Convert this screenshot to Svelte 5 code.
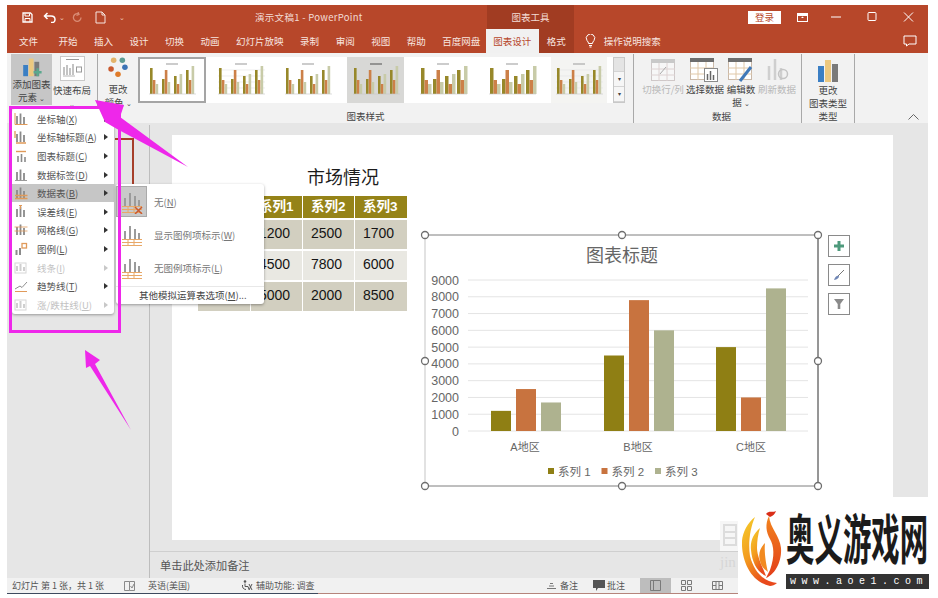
<script lang="ts">
    const tabs = ["开始", "插入", "设计", "切换", "动画", "幻灯片放映", "录制", "审阅", "视图", "帮助", "百度网盘"];

    const thumbs = [
        { w: 68, gap: 0, bg: "#fff", selected: true },
        { w: 58, gap: 6, bg: "#fff", grid: true },
        { w: 56, gap: 10, bg: "#fff" },
        { w: 57, gap: 11, bg: "#d8d8d6", dark: true },
        { w: 56, gap: 11, bg: "#fff", wide: true },
        { w: 57, gap: 12, bg: "#fff", wide: true },
        { w: 56, gap: 11, bg: "#f4f4f2", grid: true },
    ];
    const thumbBars = [
        [26, 14, 10],
        [15, 24, 12],
        [18, 10, 20],
        [24, 14, 28],
    ];

    const menuItems = [
        { label: "坐标轴", key: "X", icon: "axis" },
        { label: "坐标轴标题", key: "A", icon: "title" },
        { label: "图表标题", key: "C", icon: "top" },
        { label: "数据标签", key: "D", icon: "label" },
        { label: "数据表", key: "B", icon: "table", active: true },
        { label: "误差线", key: "E", icon: "error" },
        { label: "网格线", key: "G", icon: "grid" },
        { label: "图例", key: "L", icon: "legend" },
        { label: "线条", key: "I", icon: "off", disabled: true },
        { label: "趋势线", key: "T", icon: "trend" },
        { label: "涨/跌柱线", key: "U", icon: "off", disabled: true },
    ];

    const subItems = [
        { label: "无", key: "N", kind: "none", selected: true },
        { label: "显示图例项标示", key: "W", kind: "keys" },
        { label: "无图例项标示", key: "L", kind: "plain" },
    ];

    const table = [
        ["", "系列1", "系列2", "系列3"],
        ["", "1200", "2500", "1700"],
        ["", "4500", "7800", "6000"],
        ["", "5000", "2000", "8500"],
    ];

    // chart geometry in page pixels, relative to the chart svg
    const chartTop = 280 - 225;
    const chartZero = 431 - 225;
    const ticks = [0, 1000, 2000, 3000, 4000, 5000, 6000, 7000, 8000, 9000];
    const colors = ["#8f7f14", "#c8733f", "#aeb28f"];
    const groups = [
        { name: "A地区", cx: 106, x: [72, 97, 122], v: [1200, 2500, 1700] },
        { name: "B地区", cx: 219, x: [185, 210, 235], v: [4500, 7800, 6000] },
        { name: "C地区", cx: 332, x: [297, 322, 347], v: [5000, 2000, 8500] },
    ];
    const y = (v: number) => chartZero - (v / 9000) * (chartZero - chartTop);
    const handles = [
        [6, 10], [203, 10], [399, 10],
        [6, 136], [399, 136],
        [6, 261], [203, 261], [399, 261],
    ];
</script>

{#snippet bars(accent: string, kind: string)}
    <svg class="micon" viewBox="0 0 14 14" width="14" height="14">
        {#if kind === "off"}
            <rect x="1" y="2" width="11" height="10" fill="none" stroke="#d6d6d6" />
            <path d="M3 10V5M6.500 10V3M10 10V6" stroke="#cfcfcf" stroke-width="2" />
        {:else if kind === "trend"}
            <path d="M1 12.500H13" stroke={accent} />
            <path d="M1 10L6 7L8 8.500L13 3" stroke="#8f8f8f" fill="none" />
        {:else if kind === "legend"}
            <path d="M2.500 13V8M6 13V6" stroke="#8a8a8a" stroke-width="2" />
            <rect x="8" y="1.500" width="4.500" height="4.500" fill="none" stroke={accent} stroke-width="1.300" />
        {:else if kind === "top"}
            <path d="M2 2.500H12" stroke={accent} stroke-width="1.400" />
            <path d="M4 13V7M7.500 13V5M11 13V8" stroke="#8a8a8a" stroke-width="1.600" />
        {:else}
            <path d="M3 12V4M6.500 12V1.500M10 12V5" stroke="#8a8a8a" stroke-width="1.800" />
            {#if kind === "axis"}
                <path d="M1 1V12.500H13.500" stroke={accent} fill="none" />
            {:else if kind === "title"}
                <path d="M1 1V8M2 13H12" stroke={accent} stroke-width="1.300" fill="none" />
            {:else if kind === "table"}
                <path d="M1 9.500H13.500M1 12.500H13.500" stroke={accent} stroke-width="1.300" />
            {:else if kind === "grid"}
                <path d="M0.500 4H13.500M0.500 8H13.500" stroke={accent} stroke-width="0.800" />
            {:else if kind === "error"}
                <path d="M6.500 0.500V4M5 0.500H8" stroke={accent} />
            {:else}
                <path d="M1 12.500H13" stroke="#9a9a9a" />
            {/if}
        {/if}
    </svg>
{/snippet}

<div class="window">
    <header class="titlebar">
        <div class="qat">
            <svg class="save" width="11" height="11" viewBox="0 0 11 11">
                <path d="M1 1H8.500L10 2.500V10H1Z" fill="none" stroke="#fff" stroke-width="1.300" />
                <path d="M3 1.500V4H7.500V1.500M3 10V6.500H8V10" fill="none" stroke="#fff" />
            </svg>
            <svg width="13" height="11" viewBox="0 0 13 11">
                <path d="M2 4H8Q12 4 12 7.500T8 10.500M4.500 1L1.500 4L4.500 7" fill="none" stroke="#fff" stroke-width="1.500" />
            </svg>
            <span class="caret">⌄</span>
            <svg class="redo" width="11" height="11" viewBox="0 0 11 11">
                <path d="M9 5.500A3.800 3.800 0 1 1 6 1.800M6 0L7 2.500L4.500 3.500" fill="none" stroke="#d98c75" stroke-width="1.300" />
            </svg>
            <svg class="newdoc" width="11" height="13" viewBox="0 0 11 13">
                <path d="M1 1H7L10 4V12H1ZM7 1V4H10" fill="none" stroke="#f6e6e0" />
            </svg>
            <span class="caret more">⌄</span>
        </div>
        <div class="doc-title">演示文稿1 - PowerPoint</div>
        <div class="tools-label">图表工具</div>
        <button class="login">登录</button>
        <svg class="winicon display" width="11" height="9" viewBox="0 0 11 9">
            <rect x="0.500" y="0.500" width="10" height="8" fill="none" stroke="#fff" />
            <path d="M1 1H10V3H1ZM4 5L5.500 3.500L7 5Z" fill="#fff" />
        </svg>
        <svg class="winicon" width="36" height="10" viewBox="0 0 36 10"><path d="M13 5H23" stroke="#fff" /></svg>
        <svg class="winicon" width="36" height="10" viewBox="0 0 36 10"><rect x="14" y="0.500" width="8" height="8" rx="1" fill="none" stroke="#fff" /></svg>
        <svg class="winicon" width="36" height="10" viewBox="0 0 36 10"><path d="M14 0.500L23 9.500M23 0.500L14 9.500" stroke="#fff" /></svg>
    </header>

    <nav class="tabs">
        <span class="tab first">文件</span>
        {#each tabs as tab}
            <span class="tab">{tab}</span>
        {/each}
        <span class="tab-active">图表设计</span>
        <span class="tab-context">格式</span>
        <svg class="bulb" width="11" height="14" viewBox="0 0 11 14">
            <path d="M3.500 9.500Q3.500 8 2 6.500A4.200 4.200 0 1 1 9 6.500Q7.500 8 7.500 9.500ZM4 11.500H7M4.500 13H6.500" fill="none" stroke="#fff" />
        </svg>
        <span class="search">操作说明搜索</span>
        <svg class="comment" width="14" height="12" viewBox="0 0 14 12">
            <path d="M1 1H13V9H6L3.500 11V9H1Z" fill="none" stroke="#fff" />
        </svg>
    </nav>

    <section class="ribbon">
        <div class="group g-add">
            <div class="group-body">
                <div class="rbtn add-btn">
                    <svg width="24" height="25" viewBox="0 0 24 25">
                        <rect x="1" y="10" width="6" height="14" fill="#3b7fc4" />
                        <rect x="8" y="2" width="6" height="22" fill="#ecc87f" />
                        <rect x="15" y="6" width="6" height="18" fill="#7a7a7a" />
                        <path d="M14 19H24M19 14V24" stroke="#5ba88e" stroke-width="3" />
                    </svg>
                    <span>添加图表<br />元素 <i>⌄</i></span>
                </div>
                <div class="rbtn layout-btn">
                    <svg width="25" height="25" viewBox="0 0 25 25">
                        <rect x="0.500" y="0.500" width="24" height="24" fill="#fff" stroke="#c9c9c9" />
                        <path d="M6 3.500H19" stroke="#9a9a9a" />
                        <path d="M4 19V11M7 19V9M10 19V12M13 19V8" stroke="#9c9c9c" stroke-width="1.200" />
                        <rect x="16.500" y="11" width="5" height="5" fill="none" stroke="#9a9a9a" />
                        <path d="M3 20H15" stroke="#b5b5b5" />
                    </svg>
                    <span>快速布局<br /><i>⌄</i></span>
                </div>
            </div>
        </div>

        <div class="group g-styles">
            <div class="group-body">
                <div class="rbtn color-btn">
                    <svg width="24" height="30" viewBox="0 0 24 30">
                        <circle cx="7" cy="5" r="3.200" fill="#e3b36a" />
                        <circle cx="17" cy="5" r="3.200" fill="#5d9b93" />
                        <circle cx="4" cy="15" r="3.200" fill="#c9592e" />
                        <circle cx="20" cy="13" r="3.200" fill="#3b73b5" />
                        <circle cx="12" cy="21" r="3.200" fill="#e07b2a" />
                    </svg>
                    <span>更改<br />颜色 <i>⌄</i></span>
                </div>
                <div class="gallery">
                    {#each thumbs as t}
                        <div class="thumb" class:selected={t.selected} style="width:{t.w}px;margin-left:{t.gap}px;background:{t.bg}">
                            <svg width="52" height="38" viewBox="0 0 52 38">
                                <path d="M20 3H32" stroke={t.dark ? "#666" : "#aaa"} stroke-width="1.200" />
                                {#if t.grid}
                                    <path d="M3 9H50M3 15H50M3 21H50M3 27H50" stroke="#e2e2e2" stroke-width="0.600" />
                                {/if}
                                {#each thumbBars as set, i}
                                    {#each set as h, j}
                                        <rect
                                            x={4 + i * 12 + j * (t.wide ? 3.500 : 2.800)}
                                            y={33 - h}
                                            width={t.wide ? 3.500 : 2.600}
                                            height={h}
                                            fill={["#97882a", "#cc8048", "#c8cba8"][j]}
                                        />
                                    {/each}
                                {/each}
                                <path d="M3 33H50" stroke="#c8c8c8" stroke-width="0.600" />
                            </svg>
                        </div>
                    {/each}
                </div>
                <div class="scroller">
                    <span class="up"></span>
                    <span class="down">▾</span>
                    <span class="down">▾</span>
                </div>
            </div>
            <div class="group-label">图表样式</div>
        </div>

        <div class="group g-data">
            <div class="group-body">
                <div class="dbtn disabled">
                    <svg width="24" height="22" viewBox="0 0 24 22">
                        <rect x="0.500" y="0.500" width="23" height="21" fill="#f7f7f7" stroke="#cfc8c8" />
                        <rect x="0" y="0" width="24" height="4" fill="#c9c9c9" />
                        <path d="M0 10H24M0 16H24M8 4V22M16 4V22" stroke="#ddd2d2" />
                        <path d="M9 15L15 8" stroke="#aaa" />
                    </svg>
                    <span>切换行/列</span>
                </div>
                <div class="dbtn">
                    <svg width="30" height="24" viewBox="0 0 30 24">
                        <rect x="0.500" y="0.500" width="23" height="21" fill="#fff" stroke="#c9b8a8" />
                        <rect x="0" y="0" width="24" height="4" fill="#6d6d6d" />
                        <path d="M0 10H24M0 16H24M8 4V22M16 4V22" stroke="#e0c8a8" />
                        <rect x="14.500" y="10.500" width="13" height="13" fill="#fff" stroke="#8a8a8a" />
                        <path d="M17.500 22V16M20.500 22V13M23.500 22V17" stroke="#666" stroke-width="1.500" />
                    </svg>
                    <span>选择数据</span>
                </div>
                <div class="dbtn narrow">
                    <svg width="26" height="24" viewBox="0 0 26 24">
                        <rect x="0.500" y="0.500" width="23" height="21" fill="#fff" stroke="#c9b8a8" />
                        <rect x="0" y="0" width="24" height="4" fill="#6d6d6d" />
                        <path d="M0 10H24M0 16H24M8 4V22M16 4V22" stroke="#e0c8a8" />
                        <path d="M12 23L23 9" stroke="#3f78b8" stroke-width="3" />
                    </svg>
                    <span>编辑数<br />据 <i>⌄</i></span>
                </div>
                <div class="dbtn disabled">
                    <svg width="24" height="24" viewBox="0 0 24 24">
                        <path d="M4 22V8M10 22V1M16 22V10" stroke="#cfcfcf" stroke-width="2.500" />
                        <circle cx="18" cy="16" r="4.500" fill="none" stroke="#c4c4c4" stroke-width="1.500" />
                    </svg>
                    <span>刷新数据</span>
                </div>
            </div>
            <div class="group-label">数据</div>
        </div>

        <div class="group g-type">
            <div class="group-body">
                <div class="rbtn type-btn">
                    <svg width="22" height="22" viewBox="0 0 22 22">
                        <rect x="1" y="6" width="6" height="16" fill="#3b7fc4" />
                        <rect x="8" y="0" width="6" height="22" fill="#ecc87f" />
                        <rect x="15" y="4" width="6" height="18" fill="#7a7a7a" />
                    </svg>
                    <span>更改<br />图表类型</span>
                </div>
            </div>
            <div class="group-label">类型</div>
        </div>

        <svg class="collapse" width="11" height="6" viewBox="0 0 11 6">
            <path d="M0.500 5.500L5.500 0.500L10.500 5.500" fill="none" stroke="#666" />
        </svg>
    </section>

    <main class="workspace">
        <aside class="slides-pane">
            <div class="thumbnail"></div>
        </aside>
        <div class="editor">
            <div class="slide-area">
                <div class="slide">
                    <h2>市场情况</h2>
                    <div class="data-table">
                        {#each table as row, r}
                            <div class="row" class:head={r === 0} class:light={r === 2}>
                                {#each row as cell}
                                    <div class="cell">{cell}</div>
                                {/each}
                            </div>
                        {/each}
                    </div>

                    <svg class="chart" width="406" height="268" viewBox="0 0 406 268">
                        <rect x="6" y="10" width="393" height="251" fill="#fff" />
                        <path d="M6 10H399V261H6" fill="none" stroke="#7e7e7e" stroke-width="1" />
                        <path d="M6 10V261" stroke="#d8d8d8" stroke-width="1.500" />
                        <path d="M399 10V261" stroke="#6e6e6e" />
                        <text class="chart-title" x="203" y="37">图表标题</text>
                        {#each ticks as t}
                            <line x1="49" x2="389" y1={y(t)} y2={y(t)} stroke="#e4e4e4" />
                            <text class="tick" x="40" y={y(t) + 4.500}>{t}</text>
                        {/each}
                        {#each groups as g}
                            {#each g.v as v, i}
                                <rect x={g.x[i]} y={y(v)} width="20" height={chartZero - y(v)} fill={colors[i]} />
                            {/each}
                            <text class="cat" x={g.cx} y="226">{g.name}</text>
                        {/each}
                        {#each colors as c, i}
                            <rect x={129 + i * 53.500} y="243" width="6" height="6" fill={c} />
                            <text class="legend" x={139 + i * 53.500} y="250.500">系列 {i + 1}</text>
                        {/each}
                        {#each handles as [hx, hy]}
                            <circle cx={hx} cy={hy} r="3.500" fill="#fff" stroke="#6e6e6e" stroke-width="1.300" />
                        {/each}
                    </svg>

                    <div class="chart-tools">
                        <button aria-label="添加">
                            <svg width="12" height="12" viewBox="0 0 12 12"><path d="M6 1V11M1 6H11" stroke="#4e9a7c" stroke-width="3" /></svg>
                        </button>
                        <button aria-label="样式">
                            <svg width="12" height="12" viewBox="0 0 12 12">
                                <path d="M11 1L5 7" stroke="#777" />
                                <path d="M1 11Q3 6 6 7Q6 10 1 11Z" fill="#6f86b5" />
                            </svg>
                        </button>
                        <button aria-label="筛选">
                            <svg width="12" height="12" viewBox="0 0 12 12"><path d="M1 1H11L7.300 6V11H4.700V6Z" fill="#8a8a8a" /></svg>
                        </button>
                    </div>
                </div>
            </div>
            <div class="notes">单击此处添加备注</div>
        </div>
    </main>

    <footer class="statusbar">
        <span class="count">幻灯片 第 1 张，共 1 张</span>
        <svg class="spell" width="11" height="10" viewBox="0 0 11 10">
            <path d="M0.500 0.500H5.500V9.500H0.500ZM5.500 0.500H10.500V9.500H5.500M6.500 5L8 7L10 3" fill="none" stroke="#8a8a8a" />
        </svg>
        <span class="lang">英语(美国)</span>
        <svg class="a11y" width="12" height="11" viewBox="0 0 12 11">
            <circle cx="4" cy="1.500" r="1.300" fill="#555" />
            <path d="M1.500 5Q1 9 5 9.500M4 3.500V6.500H7L8 9.500M8 4L11 10M11 4L8 10" fill="none" stroke="#555" />
        </svg>
        <span class="access">辅助功能: 调查</span>
        <svg class="notes-ico" width="9" height="7" viewBox="0 0 9 7"><path d="M0 6.500H9M2 4H7M3 1.500H6" stroke="#777" /></svg>
        <span>备注</span>
        <svg class="comment-ico" width="12" height="11" viewBox="0 0 12 11"><path d="M0 0H12V8H5L3 11V8H0Z" fill="#555" /></svg>
        <span>批注</span>
        <div class="view active">
            <svg width="11" height="11" viewBox="0 0 11 11"><path d="M0.500 0.500H10.500V10.500H0.500ZM3.500 0.500V10.500" fill="none" stroke="#7a7a7a" /></svg>
        </div>
        <div class="view">
            <svg width="11" height="11" viewBox="0 0 11 11"><path d="M0.500 0.500H4.500V4.500H0.500ZM6.500 0.500H10.500V4.500H6.500ZM0.500 6.500H4.500V10.500H0.500ZM6.500 6.500H10.500V10.500H6.500Z" fill="none" stroke="#7a7a7a" /></svg>
        </div>
        <div class="view">
            <svg width="11" height="11" viewBox="0 0 11 11"><path d="M0.500 1.500H10.500V9.500H0.500ZM4 1.500V9.500M7 1.500V9.500M0.500 5.500H4M7 5.500H10.500" fill="none" stroke="#7a7a7a" /></svg>
        </div>
    </footer>
    <div class="window-line"></div>
</div>

<div class="menu">
    {#each menuItems as item}
        <div class="menu-row" class:active={item.active} class:disabled={item.disabled}>
            {@render bars("#e09a5a", item.icon)}
            <span class="menu-label">{item.label}(<u>{item.key}</u>)</span>
            <span class="arrow"></span>
        </div>
    {/each}
</div>

<div class="submenu">
    {#each subItems as item}
        <div class="sub-row">
            <div class="sub-icon" class:selected={item.selected}>
                <svg width="24" height="24" viewBox="0 0 24 24">
                    <path d="M5 16V8M10 16V3M15 16V6M19 16V10" stroke="#9b9b9b" stroke-width="2" />
                    <path d="M2 16.500H22M2 19.500H22M2 22.500H22M8 16V23M14 16V23" stroke="#e8a868" stroke-width="1" />
                    {#if item.kind === "none"}
                        <path d="M15 17L22 24M22 17L15 24" stroke="#c9592e" stroke-width="1.500" />
                    {/if}
                </svg>
            </div>
            <span>{item.label}(<u>{item.key}</u>)</span>
        </div>
    {/each}
    <div class="sub-more">其他模拟运算表选项(<u>M</u>)...</div>
</div>

<div class="highlight"></div>

<svg class="arrows" width="938" height="598" viewBox="0 0 938 598">
    <polygon points="95,100 124,105 120,117 188,167 117,129 105,122" fill="#ee27ea" />
    <polygon points="85,350 100,360 95,364 131,430 90,366 86,368" fill="#ee27ea" />
</svg>

<div class="watermark">
    <div class="wm-box">
        <svg width="14" height="22" viewBox="0 0 14 22"><path d="M1 1H13V21H1ZM1 8H13M1 14H13" fill="none" stroke="#dcdcdc" stroke-width="2" /></svg>
    </div>
    <span>jin</span>
</div>

<div class="logo">
    <svg class="flame" width="44" height="82" viewBox="0 0 44 82">
        <defs>
            <linearGradient id="fire" x1="0" y1="0" x2="0.500" y2="1">
                <stop offset="0" stop-color="#f5cf2c" />
                <stop offset="0.550" stop-color="#f39a1e" />
                <stop offset="1" stop-color="#e8491c" />
            </linearGradient>
            <linearGradient id="body" x1="0" y1="0" x2="0" y2="1">
                <stop offset="0" stop-color="#f2841e" />
                <stop offset="1" stop-color="#e23d1a" />
            </linearGradient>
        </defs>
        <path d="M13 11C4 18 -1 30 0 40C1 58 10 76 28 80C30 80 33 79 35 77C22 76 12 66 8 50C6 38 8 22 13 11Z" fill="url(#fire)" />
        <path d="M18 22C11 28 8 36 9 44C10 56 15 66 24 70C20 60 15 50 15 42C15 35 16 28 18 22Z" fill="url(#fire)" />
        <path d="M23 37C18 42 16 48 18 55C19 60 22 63 26 66C24 58 22 46 23 37Z" fill="#f28a20" />
        <path d="M27 10C23 18 24 26 28 33C32 40 33 50 28 64L24 72C34 68 40 54 39 42C38 30 28 22 27 10Z" fill="url(#body)" />
        <path d="M24 8C27 4 30 7 34 5C33 8 31 10 28 11Z" fill="#d92e18" />
    </svg>
    <div class="logo-text">
        <div class="logo-name"><span>奥义游戏网</span></div>
        <div class="logo-url">www.aoe1.com</div>
    </div>
</div>

<style>
    :global(body) {
        margin: 0;
        background: #fff;
        overflow: hidden;
        font-family: "Noto Sans CJK SC", "Liberation Sans", sans-serif;
    }

    i {
        font-style: normal;
        font-size: 7px;
    }

    .window {
        width: 921px;
        height: 589px;
        margin: 5px 0 0 7px;
        display: flex;
        flex-direction: column;
        font-size: 9.500px;
        color: #444;
    }

    .titlebar {
        height: 24px;
        background: #b7472a;
        display: flex;
        align-items: center;
        color: #f3dcd5;
        flex: none;
    }

    .qat {
        width: 248px;
        display: flex;
        align-items: center;
        padding-left: 15px;
        box-sizing: border-box;
        color: #fff;
    }

    .qat svg {
        flex: none;
    }

    .qat .save {
        margin-right: 10px;
    }

    .caret {
        font-size: 7px;
        margin: 0 5px 0 3px;
        color: #f0c8bc;
    }

    .redo {
        margin: 0 12px 0 2px;
    }

    .more {
        margin-left: 13px;
    }

    .doc-title {
        width: 232px;
        font-size: 9.500px;
        letter-spacing: 0.300px;
    }

    .tools-label {
        width: 87px;
        height: 100%;
        background: #a13c22;
        line-height: 24px;
        text-align: center;
    }

    .login {
        width: 33px;
        height: 13px;
        margin-left: 174px;
        padding: 0;
        border: 0;
        background: #fff;
        color: #b7472a;
        font: inherit;
        line-height: 13px;
    }

    .display {
        margin: 0 10px 0 16px;
    }

    .winicon {
        flex: none;
    }

    .tabs {
        height: 24px;
        background: #b7472a;
        display: flex;
        align-items: center;
        gap: 16.500px;
        padding-left: 12px;
        color: #f8e6e0;
        flex: none;
    }

    .tab.first {
        margin-right: 4px;
    }

    .tab-active {
        margin-left: -11px;
        width: 53px;
        height: 24px;
        background: #f1f1f1;
        color: #b7472a;
        line-height: 24px;
        text-align: center;
    }

    .tab-context {
        margin-left: -16.500px;
        width: 35px;
        height: 24px;
        background: #a13c22;
        line-height: 24px;
        text-align: center;
    }

    .bulb {
        margin-left: -5px;
        flex: none;
    }

    .search {
        margin-left: -9px;
        font-size: 9.500px;
    }

    .comment {
        margin-left: auto;
        margin-right: 11px;
    }

    .ribbon {
        height: 70px;
        background: #f2f2f2;
        display: flex;
        position: relative;
        flex: none;
    }

    .group {
        display: flex;
        flex-direction: column;
        box-sizing: border-box;
        height: 69px;
        margin-top: 1px;
        border-right: 1px solid #a9a9a9;
    }

    .group-body {
        flex: 1;
        display: flex;
        min-height: 0;
    }

    .group-label {
        height: 13px;
        line-height: 13px;
        text-align: center;
        font-size: 9.500px;
    }

    .rbtn {
        display: flex;
        flex-direction: column;
        align-items: center;
        text-align: center;
        line-height: 13px;
        white-space: nowrap;
    }

    .g-add {
        width: 91px;
        padding-left: 4px;
    }

    .add-btn {
        width: 41px;
        height: 51px;
        background: #c6c6c6;
        padding-top: 3px;
        box-sizing: border-box;
        gap: 1px;
    }

    .layout-btn {
        width: 38px;
        margin-left: 1px;
        padding-top: 2px;
        gap: 3px;
    }

    .g-styles {
        width: 536px;
    }

    .color-btn {
        width: 40px;
        padding-top: 2px;
        gap: 1px;
    }

    .color-btn svg {
        height: 28px;
    }

    .gallery {
        display: flex;
        width: 475px;
        height: 46px;
        margin-top: 3px;
        background: #fff;
        box-sizing: border-box;
    }

    .thumb {
        height: 46px;
        display: flex;
        align-items: center;
        justify-content: center;
        box-sizing: border-box;
        flex: none;
    }

    .thumb.selected {
        border: 2px solid #a5a5a5;
    }

    .scroller {
        width: 12px;
        height: 46px;
        margin-top: 3px;
        display: flex;
        flex-direction: column;
        border: 1px solid #c8c8c8;
        box-sizing: border-box;
        background: #f6f6f6;
    }

    .scroller span {
        flex: 1;
        font-size: 6px;
        line-height: 14px;
        text-align: center;
        border-bottom: 1px solid #d4d4d4;
    }

    .scroller .up {
        background: #e4e4e4;
    }

    .g-data {
        width: 168px;
        padding-left: 8px;
    }

    .dbtn {
        display: flex;
        flex-direction: column;
        align-items: center;
        width: 42px;
        padding-top: 4px;
        gap: 1px;
        text-align: center;
        line-height: 13px;
        white-space: nowrap;
    }

    .dbtn.narrow {
        width: 30px;
    }

    .dbtn svg {
        height: 24px;
    }

    .dbtn.disabled {
        color: #b8b8b8;
    }

    .g-type {
        width: 53px;
    }

    .type-btn {
        width: 100%;
        padding-top: 6px;
        gap: 2px;
    }

    .collapse {
        position: absolute;
        right: 9px;
        bottom: 3px;
    }

    .workspace {
        flex: 1;
        background: #e6e6e6;
        display: flex;
        min-height: 0;
    }

    .slides-pane {
        width: 143px;
        border-right: 1px solid #bdbdbd;
        margin-top: 2px;
        padding: 13px 0 0 108px;
        box-sizing: border-box;
        flex: none;
    }

    .thumbnail {
        width: 19px;
        height: 120px;
        box-sizing: border-box;
        border-top: 2px solid #a63f2a;
        border-right: 2px solid #a63f2a;
    }

    .editor {
        flex: 1;
        display: flex;
        flex-direction: column;
        min-width: 0;
    }

    .slide-area {
        flex: 1;
        padding: 12px 35px 0 22px;
        min-height: 0;
        overflow: hidden;
    }

    .slide {
        position: relative;
        height: 405px;
        background: #fff;
    }

    h2 {
        margin: 0;
        position: absolute;
        left: 135px;
        top: 30px;
        font-size: 18px;
        font-weight: 400;
        line-height: 22px;
        color: #1c1c1c;
    }

    .data-table {
        position: absolute;
        left: 26px;
        top: 61px;
        width: 209px;
        display: flex;
        flex-direction: column;
        gap: 2px;
    }

    .row {
        display: grid;
        grid-template-columns: 52px 51px 51px 52px;
        column-gap: 1px;
        height: 29px;
        background: #fff;
    }

    .row.head {
        height: 22px;
    }

    .cell {
        background: #d2cfc0;
        padding-left: 8px;
        font: 14px/26px "Liberation Sans", sans-serif;
        color: #151515;
    }

    .row.light .cell {
        background: #e9e8e2;
    }

    .row.head .cell {
        background: #958318;
        color: #fff;
        font-weight: 700;
        font-size: 13.500px;
        font-family: "Liberation Sans", "Noto Sans CJK SC", sans-serif;
        line-height: 22px;
    }

    .chart {
        position: absolute;
        left: 247px;
        top: 90px;
    }

    .chart text {
        font-family: "Liberation Sans", "Noto Sans CJK SC", sans-serif;
        fill: #666;
    }

    .chart-title {
        font-size: 18px;
        text-anchor: middle;
    }

    .tick {
        font-size: 12.500px;
        text-anchor: end;
    }

    .cat {
        font-size: 11px;
        text-anchor: middle;
    }

    .legend {
        font-size: 11.500px;
    }

    .chart-tools {
        position: absolute;
        left: 656px;
        top: 100px;
        display: flex;
        flex-direction: column;
        gap: 7px;
    }

    .chart-tools button {
        width: 22px;
        height: 22px;
        padding: 0;
        display: flex;
        align-items: center;
        justify-content: center;
        background: #fff;
        border: 1px solid #8a8a8a;
    }

    .notes {
        height: 27px;
        padding-left: 10px;
        line-height: 26px;
        font-size: 11.200px;
        color: #555;
        border-top: 1px solid #cfcfcf;
        box-sizing: border-box;
        flex: none;
    }

    .statusbar {
        height: 15px;
        background: #f1f1f1;
        display: flex;
        align-items: center;
        padding-left: 5px;
        font-size: 9px;
        color: #555;
        flex: none;
    }

    .statusbar span {
        white-space: nowrap;
    }

    .count {
        width: 112px;
    }

    .spell {
        margin-right: 13px;
    }

    .lang {
        width: 93px;
    }

    .a11y {
        margin-right: 3px;
    }

    .access {
        width: 291px;
    }

    .notes-ico {
        margin-right: 4px;
    }

    .comment-ico {
        margin: 0 2px 0 15px;
    }

    .view {
        width: 31px;
        height: 15px;
        display: flex;
        align-items: center;
        justify-content: center;
    }

    .view.active {
        background: #bdbdbd;
        margin-left: 15px;
    }

    .window-line {
        height: 1px;
        background: linear-gradient(to right, #3e4a5e 0 311px, #b5847b 311px 731px, #f1f1f1 731px);
    }

    .menu {
        position: absolute;
        left: 12px;
        top: 109px;
        width: 102px;
        height: 205px;
        box-sizing: border-box;
        padding-top: 0.500px;
        background: #fff;
        border-radius: 3px;
        box-shadow: 0 1px 3px rgba(0, 0, 0, 0.35);
        font-size: 9.500px;
        color: #555;
        display: flex;
        flex-direction: column;
    }

    .menu-row {
        height: 18.600px;
        display: flex;
        align-items: center;
        padding-left: 2px;
        flex: none;
        white-space: nowrap;
    }

    .menu-row.active {
        background: #c6c6c6;
    }

    .menu-row.disabled {
        color: #c2c2c2;
    }

    .micon {
        flex: none;
    }

    .menu-label {
        margin-left: 9px;
    }

    .arrow {
        margin-left: auto;
        margin-right: 6px;
        width: 0;
        height: 0;
        border-left: 4px solid #333;
        border-top: 3px solid transparent;
        border-bottom: 3px solid transparent;
    }

    .disabled .arrow {
        border-left-color: #c8c8c8;
    }

    .submenu {
        position: absolute;
        left: 116px;
        top: 184px;
        width: 148px;
        height: 120px;
        background: #fff;
        border-radius: 3px;
        box-shadow: 0 1px 3px rgba(0, 0, 0, 0.35);
        font-size: 9.500px;
        color: #777;
        box-sizing: border-box;
        padding-top: 1px;
    }

    .sub-row {
        height: 33.300px;
        display: flex;
        align-items: center;
    }

    .sub-icon {
        width: 31px;
        height: 31px;
        display: flex;
        align-items: center;
        justify-content: center;
        box-sizing: border-box;
        margin-right: 7px;
        flex: none;
    }

    .sub-icon.selected {
        background: #c9c9c9;
        border: 1px solid #aaa;
    }

    .sub-more {
        margin-top: 1px;
        border-top: 1px solid #e8e8e8;
        padding-left: 23px;
        line-height: 17px;
        color: #444;
        white-space: nowrap;
    }

    .highlight {
        position: absolute;
        left: 9px;
        top: 106px;
        width: 112px;
        height: 227px;
        box-sizing: border-box;
        border: 3px solid #ee27ea;
    }

    .arrows {
        position: absolute;
        left: 0;
        top: 0;
        pointer-events: none;
    }

    .watermark {
        position: absolute;
        left: 720px;
        top: 521px;
        width: 18px;
    }

    .wm-box {
        height: 30px;
        background: #f6f6f6;
        padding: 3px 0 0 3px;
        box-sizing: border-box;
    }

    .watermark span {
        display: block;
        margin-top: 3px;
        font: 15px "Liberation Serif", serif;
        color: #d6d6d6;
    }

    .logo {
        position: absolute;
        left: 738px;
        top: 497px;
        width: 200px;
        height: 101px;
        background: #fff;
        display: flex;
        padding: 9px 0 0 4px;
        box-sizing: border-box;
    }

    .flame {
        flex: none;
    }

    .logo-text {
        width: 143px;
    }

    .logo-name {
        height: 60px;
        padding-top: 3px;
        box-sizing: border-box;
    }

    .logo-name span {
        display: block;
        width: 180px;
        font-size: 36px;
        font-weight: 700;
        line-height: 36px;
        color: #1b1b1b;
        white-space: nowrap;
        transform: scale(0.79, 1.5);
        transform-origin: 0 0;
    }

    .logo-url {
        height: 15px;
        margin-top: 8px;
        background: #333;
        color: #fff;
        font: 10px/15px "Liberation Mono", monospace;
        letter-spacing: 5.500px;
        padding-left: 4px;
        white-space: nowrap;
        box-sizing: border-box;
    }
</style>
